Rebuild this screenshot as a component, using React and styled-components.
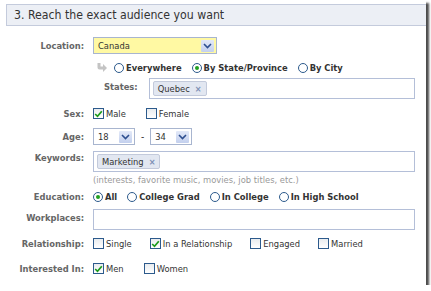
import React from "react";
import styled, { createGlobalStyle } from "styled-components";

const GlobalStyle = createGlobalStyle`
  body {
    margin: 0;
    background: #fff;
    font-family: "DejaVu Sans Condensed", "DejaVu Sans", sans-serif;
  }
`;

const Frame = styled.div`
  width: 426px;
  height: 285px;
  box-sizing: border-box;
  padding-top: 4px;
  background: #fff;
  box-shadow: 3px 3px 2px rgba(0, 0, 0, 0.7);
  overflow: hidden;
`;

const Header = styled.div`
  margin-left: 6px;
  height: 20px;
  display: flex;
  align-items: center;
  padding-left: 7px;
  background: #eceff5;
  border: 1px solid #c4cbdc;
  border-right: none;
  font-size: 12.2px;
  color: #333;
`;

const Row = styled.div`
  display: flex;
  align-items: ${(p) => p.$align || "center"};
  margin-top: ${(p) => p.$mt}px;
`;

const Label = styled.div`
  width: 84px;
  flex: none;
  text-align: right;
  font-size: 9.3px;
  font-weight: bold;
  color: #666;
  padding-top: ${(p) => p.$pt || 0}px;
  margin-right: 9px;
`;

const SubLabel = styled(Label)`
  width: auto;
  margin-left: 11px;
  margin-right: 11px;
`;

const Field = styled.div`
  display: flex;
  align-items: center;
  gap: ${(p) => p.$gap || 0}px;
`;

const ArrowMark = styled.span`
  display: flex;
  margin: 0 7px 0 4px;
`;

const SelectBox = styled.div`
  width: ${(p) => p.$w}px;
  height: 17px;
  box-sizing: border-box;
  display: flex;
  align-items: center;
  justify-content: space-between;
  padding: 0 2px 0 4px;
  border: 1px solid #a8b5cf;
  background: ${(p) => (p.$yellow ? "#fff9a3" : "#fff")};
  font-size: 9.3px;
  color: #333;
`;

const ArrowBtn = styled.span`
  width: 13px;
  height: 12px;
  display: flex;
  align-items: center;
  justify-content: center;
  background: linear-gradient(#e3e9f8, #c3d0ee);
  border-radius: 1px;
`;

const Dash = styled.span`
  font-size: 10px;
  color: #333;
  margin: 0 6px;
`;

const Opt = styled.label`
  display: flex;
  align-items: center;
  gap: 2px;
  font-size: 9.3px;
  font-weight: ${(p) => (p.$bold ? "bold" : "normal")};
  color: #333;
`;

const RadioDot = styled.span`
  width: 10px;
  height: 10px;
  box-sizing: border-box;
  border-radius: 50%;
  border: 1px solid #2c5a8c;
  background: #fff;
  display: flex;
  align-items: center;
  justify-content: center;
  &::after {
    content: "";
    width: 4px;
    height: 4px;
    border-radius: 50%;
    background: ${(p) => (p.$on ? "#21a121" : "transparent")};
  }
`;

const CheckBox = styled.span`
  width: 11px;
  height: 11px;
  box-sizing: border-box;
  border: 1px solid #2c5a8c;
  background: linear-gradient(#e9ecef, #fff);
  display: flex;
  align-items: center;
  justify-content: center;
`;

const TextBox = styled.div`
  width: ${(p) => p.$w}px;
  height: ${(p) => p.$h || 21}px;
  box-sizing: border-box;
  border: 1px solid #b4bfd8;
  display: flex;
  align-items: center;
  padding-left: 3px;
`;

const Token = styled.span`
  height: 13px;
  display: flex;
  align-items: center;
  gap: 5px;
  padding: 0 4px;
  background: #e2e7f1;
  border: 1px solid #c3cadb;
  border-radius: 2px;
  font-size: 9.3px;
  color: #333;
`;

const TokenX = styled.span`
  color: #7d8fb4;
  font-size: 9px;
  font-weight: bold;
`;

const Hint = styled.div`
  margin: 2px 0 0 93px;
  font-size: 9.3px;
  color: #999;
`;

const Chevron = () => (
  <svg width="9" height="6" viewBox="0 0 9 6">
    <path d="M1 1 L4.5 4.5 L8 1" fill="none" stroke="#2e4f8f" strokeWidth="1.6" />
  </svg>
);

const Tick = () => (
  <svg width="9" height="8" viewBox="0 0 9 8">
    <path d="M1.2 4 L3.5 6.3 L7.8 1.2" fill="none" stroke="#1c9a1c" strokeWidth="1.7" />
  </svg>
);

// grey bent arrow pointing right
const BentArrow = () => (
  <svg width="10" height="10" viewBox="0 0 10 10">
    <path
      d="M0.5 0 L3.5 0 L3.5 3.5 L6 3.5 L6 1 L10 5 L6 9 L6 6.5 L2.5 6.5 Q0.5 6.5 0.5 4.5 Z"
      fill="#c4c4c4"
    />
  </svg>
);

const Select = ({ w, yellow, value }) => (
  <SelectBox $w={w} $yellow={yellow}>
    <span>{value}</span>
    <ArrowBtn>
      <Chevron />
    </ArrowBtn>
  </SelectBox>
);

const Radio = ({ on, children }) => (
  <Opt $bold>
    <RadioDot $on={on} />
    {children}
  </Opt>
);

const Check = ({ on, children }) => (
  <Opt>
    <CheckBox>{on && <Tick />}</CheckBox>
    {children}
  </Opt>
);

export default function App() {
  return (
    <>
      <GlobalStyle />
      <Frame>
        <Header>3. Reach the exact audience you want</Header>

        <Row $mt={11}>
          <Label>Location:</Label>
          <Select w={124} yellow value="Canada" />
        </Row>

        <Row $mt={8}>
          <Label />
          <ArrowMark>
            <BentArrow />
          </ArrowMark>
          <Field $gap={10}>
            <Radio>Everywhere</Radio>
            <Radio on>By State/Province</Radio>
            <Radio>By City</Radio>
          </Field>
        </Row>

        <Row $mt={5} $align="flex-start">
          <Label />
          <SubLabel $pt={3}>States:</SubLabel>
          <TextBox $w={266}>
            <Token>
              Quebec <TokenX>×</TokenX>
            </Token>
          </TextBox>
        </Row>

        <Row $mt={9}>
          <Label>Sex:</Label>
          <Field $gap={20}>
            <Check on>Male</Check>
            <Check>Female</Check>
          </Field>
        </Row>

        <Row $mt={9}>
          <Label>Age:</Label>
          <Field>
            <Select w={42} value="18" />
            <Dash>-</Dash>
            <Select w={42} value="34" />
          </Field>
        </Row>

        <Row $mt={6} $align="flex-start">
          <Label $pt={1}>Keywords:</Label>
          <TextBox $w={322}>
            <Token>
              Marketing <TokenX>×</TokenX>
            </Token>
          </TextBox>
        </Row>

        <Hint>(interests, favorite music, movies, job titles, etc.)</Hint>

        <Row $mt={6}>
          <Label>Education:</Label>
          <Field $gap={10}>
            <Radio on>All</Radio>
            <Radio>College Grad</Radio>
            <Radio>In College</Radio>
            <Radio>In High School</Radio>
          </Field>
        </Row>

        <Row $mt={7} $align="flex-start">
          <Label $pt={3}>Workplaces:</Label>
          <TextBox $w={322} />
        </Row>

        <Row $mt={8}>
          <Label>Relationship:</Label>
          <Field $gap={18}>
            <Check>Single</Check>
            <Check on>In a Relationship</Check>
            <Check>Engaged</Check>
            <Check>Married</Check>
          </Field>
        </Row>

        <Row $mt={14}>
          <Label>Interested In:</Label>
          <Field $gap={20}>
            <Check on>Men</Check>
            <Check>Women</Check>
          </Field>
        </Row>
      </Frame>
    </>
  );
}
